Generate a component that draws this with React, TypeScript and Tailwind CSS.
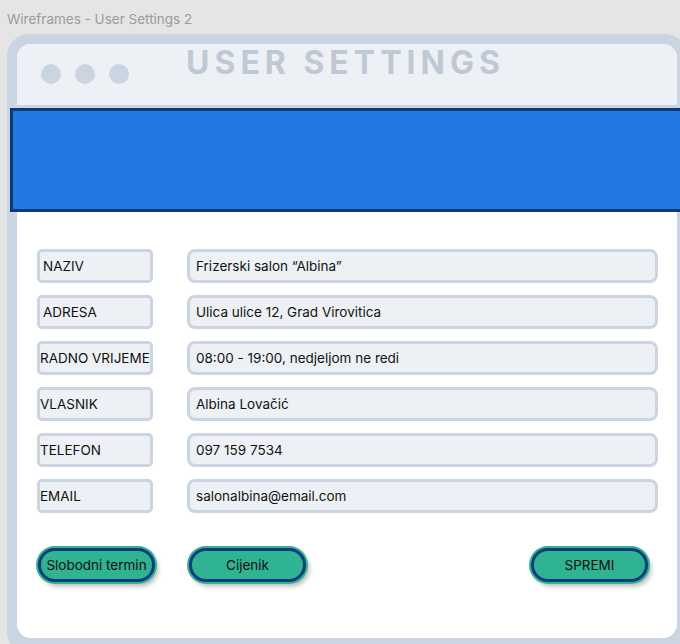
import React from "react";

const rows = [
  { label: "NAZIV", value: "Frizerski salon \u201cAlbina\u201d", pad: "pl-[3px]" },
  { label: "ADRESA", value: "Ulica ulice 12, Grad Virovitica", pad: "pl-[3px]" },
  { label: "RADNO VRIJEME", value: "08:00 - 19:00, nedjeljom ne redi", pad: "pl-0" },
  { label: "VLASNIK", value: "Albina Lovačić", pad: "pl-0" },
  { label: "TELEFON", value: "097 159 7534", pad: "pl-0" },
  { label: "EMAIL", value: "salonalbina@email.com", pad: "pl-0" },
];

function PillButton({ children }: { children: React.ReactNode }) {
  return (
    <button className="w-[117px] h-[34px] rounded-full bg-[#2fb392] border-[3px] border-[#0e3c7c] text-[13.5px] text-[#111] shadow-[0_0_0_2px_#2fb392,3px_4px_5px_rgba(0,0,0,0.3)] flex items-center justify-center whitespace-nowrap">
      {children}
    </button>
  );
}

export default function App() {
  return (
    <div className="w-[680px] h-[644px] overflow-hidden bg-[#e5e5e5] font-['Inter','Liberation_Sans',sans-serif]">
      {/* caption */}
      <div className="h-[34px] pl-[7px] pt-[11px] text-[13.5px] leading-[17px] text-[#9b9b9b]">
        Wireframes - User Settings 2
      </div>

      {/* window frame */}
      <div className="ml-[7px] w-[680px] h-[620px] bg-[#cbd5e1] rounded-[22px] p-[10px]">
        <div className="h-[594px] bg-white rounded-[14px] flex flex-col">
          {/* title bar */}
          <div className="h-[61px] bg-[#edf1f5] rounded-t-[14px] flex items-start border-b-[3px] border-[#cbd5e1] box-content">
            <div className="flex gap-[14px] pl-[24px] pt-[20px]">
              <span className="w-[20px] h-[20px] rounded-full bg-[#cbd5e1]" />
              <span className="w-[20px] h-[20px] rounded-full bg-[#cbd5e1]" />
              <span className="w-[20px] h-[20px] rounded-full bg-[#cbd5e1]" />
            </div>
            <h1 className="ml-[57px] mt-[1px] text-[32px] leading-[36px] font-bold tracking-[5px] text-[#bfc9d6]">
              USER SETTINGS
            </h1>
          </div>

          {/* banner */}
          <div className="-ml-[7px] w-[680px] h-[104px] bg-[#2279e2] border-[3px] border-[#0b3b78]" />

          {/* fields */}
          <div className="flex flex-col gap-[12px] pt-[37px] pl-[20px] pr-[19px]">
            {rows.map((r) => (
              <div key={r.label} className="flex gap-[34px] h-[34px]">
                <div
                  className={`w-[116px] shrink-0 rounded-[5px] border-[3px] border-[#cbd5e1] bg-[#edf1f5] flex items-center pt-[1px] ${r.pad} text-[13.5px] text-[#111] whitespace-nowrap overflow-hidden`}
                >
                  {r.label}
                </div>
                <div className="flex-1 rounded-[8px] border-[3px] border-[#cbd5e1] bg-[#edf1f5] flex items-center pt-[1px] pl-[6px] text-[13.5px] text-[#111]">
                  {r.value}
                </div>
              </div>
            ))}
          </div>

          {/* actions */}
          <div className="flex items-center pt-[35px] pl-[21px] pr-[29px]">
            <PillButton>Slobodni termin</PillButton>
            <div className="ml-[34px]">
              <PillButton>Cijenik</PillButton>
            </div>
            <div className="ml-auto">
              <PillButton>SPREMI</PillButton>
            </div>
          </div>
        </div>
      </div>
    </div>
  );
}
